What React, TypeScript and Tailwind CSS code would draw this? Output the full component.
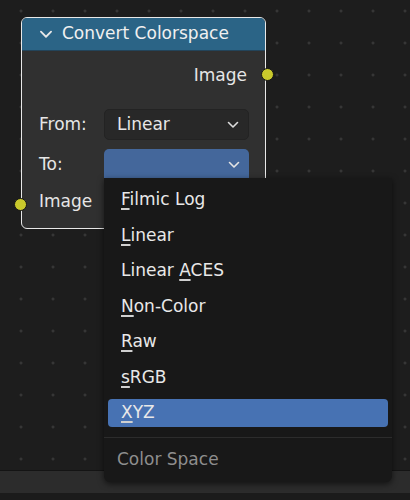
import React from 'react';

const font = { fontFamily: '"DejaVu Sans", "Noto Sans", sans-serif' };

const Chevron = ({ className = '' }: { className?: string }) => (
  <svg width="12" height="8" viewBox="0 0 12 8" className={className}>
    <polyline points="1.5,1.5 6,6 10.5,1.5" fill="none" stroke="currentColor" strokeWidth="1.6" strokeLinecap="round" strokeLinejoin="round" />
  </svg>
);

const Socket = ({ className = '' }: { className?: string }) => (
  <div className={`absolute w-[13px] h-[13px] rounded-full bg-[#c9c92c] border border-[#151515] ${className}`} />
);

// label with the mnemonic letter underlined
const Mn = ({ pre = '', key1, post = '' }: { pre?: string; key1: string; post?: string }) => (
  <span>
    {pre}
    <span className="underline decoration-[1.5px] underline-offset-[3px] decoration-[#d0d0d0]">{key1}</span>
    {post}
  </span>
);

const items = [
  { pre: '', k: 'F', post: 'ilmic Log' },
  { pre: '', k: 'L', post: 'inear' },
  { pre: 'Linear ', k: 'A', post: 'CES' },
  { pre: '', k: 'N', post: 'on-Color' },
  { pre: '', k: 'R', post: 'aw' },
  { pre: '', k: 's', post: 'RGB' },
  { pre: '', k: 'X', post: 'YZ', active: true },
];

export default function App() {
  return (
    <div className="w-[410px] h-[500px] flex flex-col bg-[#1d1d1d] overflow-hidden text-[17px] text-[#e6e6e6]" style={font}>
      {/* node canvas */}
      <div className="relative h-[471px] shrink-0 bg-[radial-gradient(circle,#363636_1.2px,transparent_1.8px)] bg-[length:32px_32px] bg-[position:5px_-5px] border-b border-[#141414]">
        {/* node */}
        <div className="absolute left-[21px] top-[17px] w-[245px] h-[212px] rounded-[6px] border-[1.5px] border-[#e8e8e8] bg-[#303030]">
          <div className="h-[33px] rounded-t-[5px] bg-[#2b6486] border-b border-[#23445a] flex items-center pl-[17px] gap-[9px] text-[#f0f0f0] text-[17px]">
            <Chevron className="text-[#e8e8e8] w-[14px] h-[9px]" />
            <span>Convert Colorspace</span>
          </div>
          <div className="relative flex flex-col">
            <div className="h-[48px] flex items-center justify-end pr-[18px] pt-[1px]">Image</div>
            <div className="h-[31px] mt-[10px] flex items-center">
              <span className="w-[82px] pl-[17px]">From:</span>
              <div className="w-[145px] h-[31px] rounded-[5px] bg-[#282828] border border-[#232323] flex items-center justify-between pl-[12px] pr-[9px]">
                <span>Linear</span>
                <Chevron className="text-[#dcdcdc]" />
              </div>
            </div>
            <div className="h-[32px] mt-[9px] flex items-center">
              <span className="w-[82px] pl-[17px]">To:</span>
              <div className="w-[145px] h-[32px] rounded-t-[5px] bg-[#44679b] flex items-center justify-end pr-[9px]">
                <Chevron className="text-[#e4e4e4]" />
              </div>
            </div>
            <div className="h-[42px] flex items-center pl-[17px]">Image</div>
            <Socket className="right-[-8.5px] top-[17px]" />
            <Socket className="left-[-8.5px] top-[147px]" />
          </div>
        </div>

        {/* dropdown menu */}
        <div className="absolute left-[104px] top-[178px] w-[288px] h-[304px] z-10 rounded-b-[6px] bg-[#181818] shadow-[0_2px_6px_rgba(0,0,0,0.6)] pt-[4px] flex flex-col">
          {items.map((it) => (
            <div key={it.k} className="h-[35.5px] px-[4px] py-[3.75px] shrink-0">
              <div className={`h-full rounded-[4px] flex items-center pl-[13px] text-[#e8e8e8] ${it.active ? 'bg-[#4772b3]' : ''}`}>
                <Mn pre={it.pre} key1={it.k} post={it.post} />
              </div>
            </div>
          ))}
          <div className="mt-[6px] h-px bg-[#2c2c2c] shrink-0" />
          <div className="h-[44px] flex items-center pl-[13px] text-[#8e8e8e]">Color Space</div>
        </div>
      </div>
      {/* bottom strip */}
      <div className="h-[22px] shrink-0 bg-[#2c2c2c]" />
      <div className="flex-1 bg-[#1b1b1b]" />
    </div>
  );
}
